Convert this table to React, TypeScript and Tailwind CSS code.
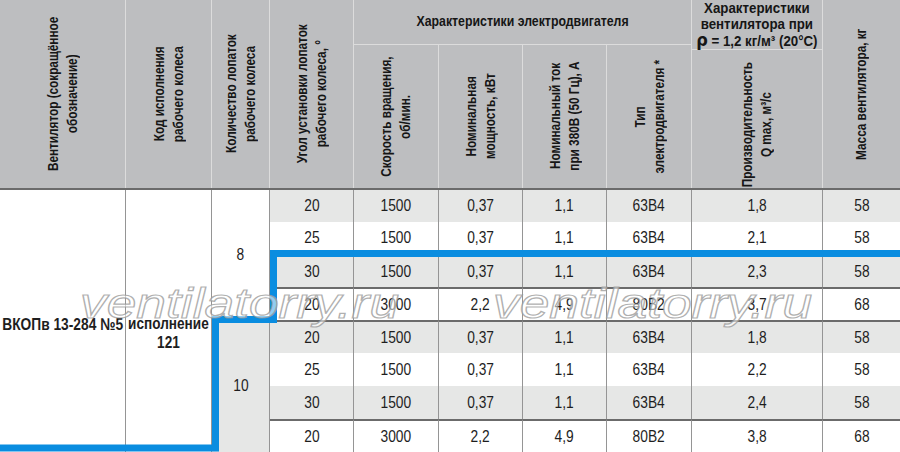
import React from 'react'

const rows = [
  ['20', '1500', '0,37', '1,1', '63В4', '1,8', '58'],
  ['25', '1500', '0,37', '1,1', '63В4', '2,1', '58'],
  ['30', '1500', '0,37', '1,1', '63В4', '2,3', '58'],
  ['20', '3000', '2,2', '4,9', '80В2', '3,7', '68'],
  ['20', '1500', '0,37', '1,1', '63В4', '1,8', '58'],
  ['25', '1500', '0,37', '1,1', '63В4', '2,2', '58'],
  ['30', '1500', '0,37', '1,1', '63В4', '2,4', '58'],
  ['20', '3000', '2,2', '4,9', '80В2', '3,8', '68'],
]

// rows that start a new group get a dark rule on top
const groupStart = [2, 3, 4, 7]

function VText({ lines }: { lines: string[] }) {
  return (
    <div className="[writing-mode:vertical-rl] rotate-180 scale-y-[0.84] text-center text-[14px] leading-[19px] font-bold whitespace-nowrap">
      {lines.map((l, i) => (
        <React.Fragment key={i}>
          {i > 0 && <br />}
          {l}
        </React.Fragment>
      ))}
    </div>
  )
}

function HeadCol({ w, lines, last }: { w: number; lines: string[]; last?: boolean }) {
  return (
    <div
      className={`h-full flex items-center justify-center shrink-0 ${last ? '' : 'border-r border-[#dcdcdc]'}`}
      style={{ width: w }}
    >
      <VText lines={lines} />
    </div>
  )
}

function Watermark({ left }: { left: string }) {
  return (
    <div
      className={`absolute top-[282px] ${left} text-[43px] leading-none italic font-['Liberation_Sans',Arial,sans-serif] text-white/55 [-webkit-text-stroke:1.2px_rgba(150,150,150,0.75)] scale-x-[1.24] origin-left pointer-events-none whitespace-nowrap`}
    >
      ventilatorry.ru
    </div>
  )
}

export default function App() {
  return (
    <div className="relative w-[900px] h-[452px] overflow-hidden bg-white text-[#1e1e1e] font-['Liberation_Sans',Arial,sans-serif]">
      {/* Header */}
      <div className="flex h-[190px] bg-[#bdbec0] border-b-2 border-[#6b6b6b] text-[#161616]">
        <HeadCol w={126} lines={['Вентилятор (сокращённое', 'обозначение)']} />
        <HeadCol w={86} lines={['Код исполнения', 'рабочего колеса']} />
        <HeadCol w={58} lines={['Количество лопаток', 'рабочего колеса']} />
        <HeadCol w={84} lines={['Угол установки лопаток', 'рабочего колеса, °']} />

        <div className="flex flex-col w-[338px] shrink-0 border-r border-[#dcdcdc]">
          <div className="h-[52px] flex items-center justify-center border-b border-[#dcdcdc] text-[14px] font-bold">
            <span className="inline-block scale-x-[0.88] whitespace-nowrap">Характеристики электродвигателя</span>
          </div>
          <div className="flex flex-1">
            <HeadCol w={85} lines={['Скорость вращения,', 'об/мин.']} />
            <HeadCol w={84} lines={['Номинальная', 'мощность, кВт']} />
            <HeadCol w={84} lines={['Номинальный ток', 'при 380В (50 Гц), А']} />
            <HeadCol w={85} lines={['Тип', 'электродвигателя *']} last />
          </div>
        </div>

        <div className="flex flex-col w-[131px] shrink-0 border-r border-[#dcdcdc]">
          <div className="h-[52px] flex items-center justify-center border-b border-[#dcdcdc] text-center text-[14px] leading-[16px] font-bold">
            <div className="scale-x-[0.95] whitespace-nowrap">
              Характеристики
              <br />
              вентилятора при
              <br />
              <span className="text-[17px] font-['DejaVu_Sans',sans-serif]">ρ</span> = 1,2 кг/м³ (20°C)
            </div>
          </div>
          <div className="flex flex-1 items-center justify-center">
            <VText lines={['Производительность', 'Q max, м³/с']} />
          </div>
        </div>

        <HeadCol w={77} lines={['Масса вентилятора, кг']} last />
      </div>

      {/* Body */}
      <div className="relative grid grid-cols-[126px_86px_58px_84px_85px_84px_84px_85px_131px_77px] grid-rows-[32px_32px_33px_33px_33px_33px_33px_33px] text-[16px]">
        <div className="row-span-8 col-start-1 row-start-1 flex items-center justify-center pt-2 border-r border-[#959595] font-bold text-[17px] whitespace-nowrap">
          <span className="inline-block scale-x-[0.81]">ВКОПв 13-284 №5</span>
        </div>
        <div className="row-span-8 col-start-2 row-start-1 flex items-center justify-center pt-6 border-r border-[#959595] font-bold text-[17px] leading-[19px] text-center">
          <span className="inline-block scale-x-[0.8] whitespace-nowrap">
            исполнение
            <br />
            121
          </span>
        </div>
        <div className="row-span-4 col-start-3 row-start-1 flex items-center justify-center border-r border-[#959595]">
          <span className="inline-block scale-x-[0.86]">8</span>
        </div>
        <div className="row-span-4 col-start-3 row-start-5 flex items-center justify-center border-r border-[#959595] bg-[#e6e7e6]">
          <span className="inline-block scale-x-[0.86]">10</span>
        </div>

        {rows.map((r, ri) =>
          r.map((v, ci) => (
            <div
              key={`${ri}-${ci}`}
              className={`flex items-center justify-center ${ri % 2 === 0 ? 'bg-[#e6e7e6]' : 'bg-white'} ${
                ci < 6 ? 'border-r border-[#959595]' : ''
              } ${groupStart.includes(ri) ? 'border-t-2 border-t-[#6b6b6b]' : ''}`}
              style={{ gridColumnStart: ci + 4, gridRowStart: ri + 1 }}
            >
              <span className="inline-block scale-x-[0.86]">{v}</span>
            </div>
          ))
        )}

        {/* highlight outline */}
        <svg className="absolute inset-0 pointer-events-none" width={900} height={262}>
          <polyline
            points="0,258 215.5,258 215.5,129.5 273.5,129.5 273.5,63.5 900,63.5"
            fill="none"
            stroke="#0a8de0"
            strokeWidth={7}
            strokeLinejoin="miter"
          />
        </svg>
      </div>

      <Watermark left="left-[80px]" />
      <Watermark left="left-[493px]" />
    </div>
  )
}
